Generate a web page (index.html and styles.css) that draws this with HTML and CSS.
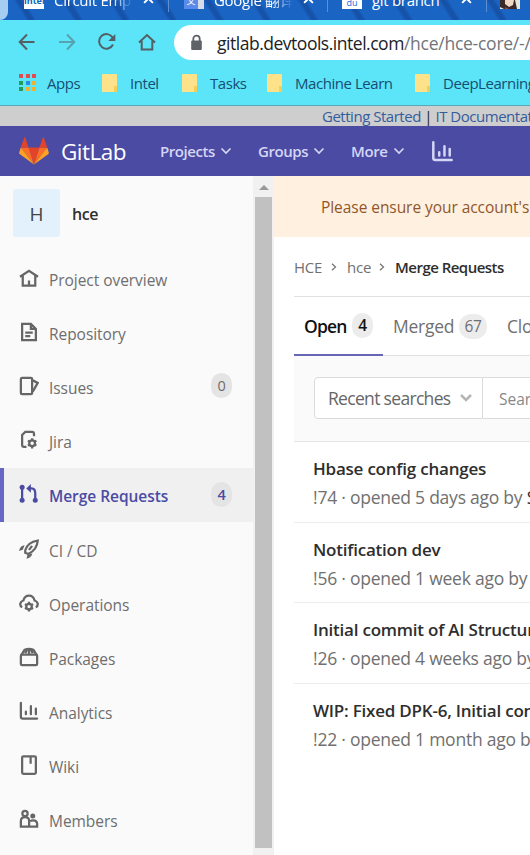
FILE: index.html
```html
<!DOCTYPE html>
<html lang="en">
<head>
<meta charset="utf-8">
<title>Merge Requests · hce · GitLab</title>
<link rel="stylesheet" href="styles.css">
</head>
<body>
<header class="tabstrip">
  <span class="tab-edge"></span>
  <div class="tab tab-1"><span class="fav fav-intel">intel</span><span class="tab-title fade">Circuit Emp</span><svg class="close" viewBox="0 0 10 10"><path d="M1 1l8 8M9 1L1 9"/></svg></div>
  <div class="tab tab-2"><span class="fav fav-google">文</span><span class="tab-title fade">Google 翻译</span><svg class="close" viewBox="0 0 10 10"><path d="M1 1l8 8M9 1L1 9"/></svg></div>
  <div class="tab tab-3"><span class="fav fav-du">du</span><span class="tab-title">git branch</span><svg class="close" viewBox="0 0 10 10"><path d="M1 1l8 8M9 1L1 9"/></svg></div>
  <div class="tab tab-4"><svg class="face" viewBox="0 0 20 9"><path fill="#3a2a28" d="M0 0h20v9H0z"/><path fill="#f0d9c4" d="M5 0h9l-1 5-4 2-4-3z"/><path fill="#e4e8dc" d="M15 0h5v9h-3zM0 7l4 2H0z"/><path fill="#b33a3a" d="M5 7l4 2H5z"/></svg></div>
</header>
<div class="toolbar">
  <svg class="nav" viewBox="0 0 20 20"><path d="M17.500 10H3M10 2.500L2.700 10l7.300 7.500"/></svg>
  <svg class="nav dim" viewBox="0 0 20 20"><path d="M2 10h15M10 2.500l7.300 7.500-7.300 7.500"/></svg>
  <svg class="nav" viewBox="0 0 20 20"><path d="M16 12.500A7.300 7.300 0 1 1 15.600 5.500"/><path class="solid" d="M18.300 2v7h-7z"/></svg>
  <svg class="nav" viewBox="0 0 20 20"><path d="M2 10.500l8-7.500 8 7.500M4.700 9v8.500h10.600V9"/></svg>
  <div class="omnibox">
    <svg class="lock" viewBox="0 0 12 16"><path d="M3 7V4.500a3 3 0 0 1 6 0V7" fill="none" stroke="#5f6368" stroke-width="1.700"/><rect x="1" y="6" width="10" height="9" rx="1" fill="#5f6368"/></svg>
    <span class="url">gitlab.devtools.intel.com<span class="path">/hce/hce-core/-/</span></span>
  </div>
</div>
<nav class="bookmarks">
  <span class="apps"><i></i><i></i><i></i><i></i><i></i><i></i><i></i><i></i><i></i></span><span class="bm bm-apps">Apps</span>
  <span class="folder"></span><span class="bm bm-intel">Intel</span>
  <span class="folder"></span><span class="bm bm-tasks">Tasks</span>
  <span class="folder"></span><span class="bm bm-ml">Machine Learn</span>
  <span class="folder"></span><span class="bm">DeepLearning</span>
</nav>
<div class="notice"><a>Getting Started</a> <b>|</b> <a>IT Documentat</a></div>
<div class="gitlab-bar">
  <svg class="logo" viewBox="0 0 30 28"><path fill="#e24329" d="M15 27.500L9.500 10.500h11z"/><path fill="#fc6d26" d="M15 27.500L9.500 10.500H1.800zM15 27.500l5.500-17h7.700z"/><path fill="#fca326" d="M1.800 10.500L.2 15.600c-.2.500 0 1 .4 1.300L15 27.500zM28.200 10.500l1.600 5.100c.2.500 0 1-.4 1.300L15 27.500z"/><path fill="#e24329" d="M1.800 10.500h7.700L6.200.500c-.2-.5-.8-.5-1 0zM28.200 10.500h-7.700L23.800.500c.2-.5.800-.5 1 0z"/></svg>
  <span class="brand">GitLab</span>
  <span class="menu m-projects">Projects</span><svg class="chev" viewBox="0 0 12 8"><path d="M1.500 1.500L6 6l4.500-4.500"/></svg>
  <span class="menu m-groups">Groups</span><svg class="chev" viewBox="0 0 12 8"><path d="M1.500 1.500L6 6l4.500-4.500"/></svg>
  <span class="menu m-more">More</span><svg class="chev" viewBox="0 0 12 8"><path d="M1.500 1.500L6 6l4.500-4.500"/></svg>
  <svg class="chart" viewBox="0 0 16 16"><path d="M1 1v12q0 1.500 1.500 1.500H15M5.500 8.500V11M9.500 4v7M13.500 6v5"/></svg>
</div>
<div class="body">
  <aside class="sidebar">
    <div class="project"><span class="avatar">H</span><span class="pname">hce</span></div>
    <div class="item"><svg class="ico" viewBox="0 0 16 16"><path d="M.8 7L8 2.200 15.200 7M3 6v8h10V6M8 10v4"/></svg><span>Project overview</span></div>
    <div class="item"><svg class="ico" viewBox="0 0 16 16"><path d="M2.500 1.500h7l4 4v9h-11zM9.500 1.500v4h4M5 8.500h6M5 11.300h4"/></svg><span>Repository</span></div>
    <div class="item"><svg class="ico" viewBox="0 0 16 16"><rect x="1.500" y="1.500" width="9" height="13" rx="1"/><path d="M11 3.500l4 2-4 7"/></svg><span>Issues</span><em class="count">0</em></div>
    <div class="item"><svg class="ico" viewBox="0 0 16 16"><path d="M12 5V3q0-1.500-1.500-1.500H5L2.500 4v8q0 1.500 1.500 1.500h2"/><circle cx="10.500" cy="10.500" r="2.300"/><path d="M10.500 6.500v2M10.500 12.700v2M7.100 8.500l1.500.9M12.400 11.600l1.500.9M7.100 12.500l1.500-.9M12.400 9.400l1.500-.9"/></svg><span>Jira</span></div>
    <div class="item active"><svg class="ico" viewBox="0 0 16 16"><path d="M2.500 3v10M7.500 3.500h2.500q3 0 3 4V13"/><path class="solid" d="M9.500 0v7L5.800 3.500z"/><circle class="solid" cx="2.500" cy="2.500" r="2"/><circle class="solid" cx="2.500" cy="13" r="2"/><circle class="solid" cx="13" cy="13" r="2"/></svg><span>Merge Requests</span><em class="count">4</em></div>
    <div class="item"><svg class="ico" viewBox="0 0 16 16"><path d="M5 9q2-6.500 10-7.800Q14.500 8.500 7.500 12L5 11zM8 8.700l2.500-3.200"/><path class="solid" d="M4.500 5Q1 5.200 0 9.500l3-1zM10.700 11.500q-.5 3-4.700 4.300l.7-3z"/></svg><span>CI / CD</span></div>
    <div class="item"><svg class="ico" viewBox="0 0 16 16"><path d="M2.500 11.500Q.8 10.500 1 8.500q.5-2 2.500-2.500Q4.500 2 8 2t4.500 4q2 .5 2.500 2.500.2 2-1.500 3"/><circle cx="8" cy="10.800" r="2.200"/><path d="M8 7v1.500M8 13v1.700M4.700 8.900l1.300.7M10 12l1.300.7M4.700 12.700L6 12M10 9.600l1.300-.7"/></svg><span>Operations</span></div>
    <div class="item"><svg class="ico" viewBox="0 0 16 16"><rect x="1.500" y="6" width="13" height="8.500" rx="1"/><path d="M1.800 6.500L4.500 2.200Q8 1 11.500 2.200l2.700 4.300M8 1.500V6M5 5l1.300-2.500M11 5L9.700 2.500"/></svg><span>Packages</span></div>
    <div class="item"><svg class="ico" viewBox="0 0 16 16"><path stroke-linecap="round" d="M1.500 1.500v11q0 1.500 1.500 1.500h11.500M5.500 8.500v2M9.500 4v6.500M13.500 6v4.500"/></svg><span>Analytics</span></div>
    <div class="item"><svg class="ico" viewBox="0 0 16 16"><rect x="2.500" y="1" width="11" height="14" rx="1"/><path d="M9.300 1v6"/></svg><span>Wiki</span></div>
    <div class="item"><svg class="ico" viewBox="0 0 16 16"><circle cx="4.800" cy="3.500" r="2.100"/><path d="M1.500 14V9.500q0-3 3.300-3t3.300 3V14zM8 14h6.500v-2q0-3-3.200-3-1.500 0-2.300.8"/><circle class="solid" cx="11" cy="5.500" r="2"/></svg><span>Members</span></div>
  </aside>
  <div class="scrollbar"><span class="up"></span><span class="thumb"></span></div>
  <main class="main">
    <div class="alert">Please ensure your account's</div>
    <div class="content">
      <div class="crumbs"><span class="c-group">HCE</span><svg class="sep" viewBox="0 0 6 8"><path d="M1 .8L4.500 4 1 7.200"/></svg><span class="c-proj">hce</span><svg class="sep" viewBox="0 0 6 8"><path d="M1 .8L4.500 4 1 7.200"/></svg><strong>Merge Requests</strong></div>
      <div class="tabs"><div class="t on"><span class="t-open">Open</span><em>4</em></div><div class="t"><span class="t-merged">Merged</span><em class="wide">67</em></div><div class="t"><span>Clo</span></div></div>
      <div class="filter"><div class="recent"><span>Recent searches</span><svg viewBox="0 0 12 8"><path d="M1 1l5 5 5-5"/></svg></div><div class="search">Sear</div></div>
      <div class="mr"><h3>Hbase config changes</h3><p>!74 · opened 5 days ago by <b>S</b></p></div>
      <div class="mr"><h3>Notification dev</h3><p>!56 · opened 1 week ago by</p></div>
      <div class="mr"><h3>Initial commit of AI Structur</h3><p>!26 · opened 4 weeks ago by</p></div>
      <div class="mr last"><h3>WIP: Fixed DPK-6, Initial con</h3><p>!22 · opened 1 month ago by</p></div>
    </div>
  </main>
</div>
</body>
</html>
```
FILE: styles.css
```css
* { box-sizing: border-box; }
body { margin: 0; width: 530px; height: 855px; overflow: hidden; background: #fff; font-family: "Open Sans", "Noto Sans CJK SC", sans-serif; white-space: nowrap; }
svg { flex: none; }
em { font-style: normal; }
.tabstrip { height: 20px; display: flex; overflow: hidden; background: repeating-linear-gradient(58deg, #1a64c4 0 22px, #1552a8 25px 28px, #1a64c4 31px 40px); color: #fff; }
.tab-edge { width: 8px; height: 20px; background: #a5cdf2; border-radius: 0 0 8px 0; }
.tab { height: 12px; display: flex; align-items: flex-start; flex: none; border-right: 1px solid #5d8fd2; }
.tab-1 { width: 161px; padding-left: 16px; }
.tab-2 { width: 159px; padding-left: 15px; }
.tab-3 { width: 159px; padding-left: 14px; }
.tab-4 { padding-left: 13px; border: 0; }
.fav { width: 20px; height: 9px; margin-right: 10px; overflow: hidden; font-size: 9px; line-height: 2px; text-align: center; }
.fav-intel { background: #fff; color: #0868b8; font-weight: 700; }
.fav-google { background: #5b8bea; border-right: 6px solid #d8dbe8; }
.fav-du { background: #fff; color: #1769e0; line-height: 5px; }
.face { width: 20px; height: 9px; }
.tab-title { width: 83px; font-size: 15px; line-height: 20px; margin-top: -10px; overflow: hidden; letter-spacing: -.3px; }
.fade { -webkit-mask-image: linear-gradient(90deg, #000 70%, transparent 95%); mask-image: linear-gradient(90deg, #000 70%, transparent 95%); }
.close { width: 11px; height: 11px; margin: -7px 0 0 6px; fill: none; stroke: #fff; stroke-width: 1.800; }
.toolbar { height: 45px; background: #5ce5f8; display: flex; align-items: center; padding-left: 17px; }
.nav { width: 20px; height: 20px; margin-right: 20px; margin-top: -1px; fill: none; stroke: #555f66; stroke-width: 2; }
.nav .solid { fill: #555f66; stroke: none; }
.dim { opacity: .5; }
.omnibox { flex: 1; height: 35px; margin-left: -3px; background: #fff; border-radius: 18px 0 0 18px; display: flex; align-items: center; overflow: hidden; padding-left: 16px; }
.lock { width: 13px; height: 17px; }
.url { font-size: 17.500px; margin-left: 14px; color: #202124; letter-spacing: -.48px; }
.path { color: #70757a; letter-spacing: -.25px; }
.bookmarks { height: 41px; background: #5ce5f8; border-bottom: 1px solid #58a9b8; display: flex; align-items: center; padding: 0 0 5px 19px; color: #174e74; font-size: 15px; letter-spacing: -.45px; overflow: hidden; }
.apps { width: 17px; height: 17px; display: grid; grid-template-columns: repeat(3, 4px); gap: 2.500px; margin-right: 11px; flex: none; }
.apps i { height: 4px; background: #e34b50; }
.apps i:nth-child(4), .apps i:nth-child(7) { background: #279b58; }
.apps i:nth-child(5) { background: #2a8be0; }
.apps i:nth-child(6), .apps i:nth-child(8), .apps i:nth-child(9) { background: #edb32e; }
.folder { width: 15px; height: 18px; background: linear-gradient(#f6ce55, #f6ce55) 100% 100% / 3px 6px no-repeat #fde28a; border-radius: 1px; margin-right: 13px; flex: none; }
.bm { flex: none; }
.bm-apps { width: 55px; }
.bm-intel { width: 52px; }
.bm-tasks { width: 57px; }
.bm-ml { width: 120px; }
.notice { height: 20px; background: #cecece; padding-left: 322px; font-size: 15px; line-height: 20px; letter-spacing: -.48px; color: #345d9d; overflow: hidden; }
.notice b { color: #222; font-weight: 400; }
.gitlab-bar { height: 50px; background: #4b4ba3; display: flex; align-items: center; padding-left: 19px; color: #d5d5f5; }
.logo { width: 30px; height: 28px; }
.brand { color: #fff; font-size: 22.500px; width: 99px; margin-left: 12px; font-weight: 500; letter-spacing: -.5px; }
.menu { font-size: 15px; font-weight: 600; letter-spacing: -.42px; }
.m-projects { width: 60px; }
.m-groups { width: 55px; }
.m-more { width: 42px; }
.chev { width: 12px; height: 8px; fill: none; stroke: #d5d5f5; stroke-width: 1.700; margin-right: 26px; }
.chart { width: 21px; height: 21px; margin-left: 1px; fill: none; stroke: #d5d5f5; stroke-width: 1.900; stroke-linecap: round; }
.body { height: 679px; display: flex; }
.sidebar { width: 253px; background: #fafafa; padding-top: 13px; flex: none; overflow: hidden; }
.project { height: 62.500px; display: flex; padding-left: 13px; }
.avatar { width: 47px; height: 48px; background: #e3f1fd; border-radius: 3px; font-size: 19px; line-height: 51px; text-align: center; color: #444; font-weight: 500; }
.pname { margin-left: 12px; font-size: 16px; line-height: 51px; font-weight: 600; color: #303030; letter-spacing: -.4px; }
.item { height: 54.200px; display: flex; align-items: center; padding: 2px 0 0 19px; color: #6e6e6e; font-size: 15.500px; letter-spacing: -.05px; }
.ico { width: 20px; height: 20px; margin: -4px 10px 0 0; fill: none; stroke: #666; stroke-width: 1.800; }
.ico .solid { fill: #666; stroke: none; }
.item.active { background: #f0f0f0; border-left: 4px solid #6666c4; padding-left: 15px; color: #4b4ba3; font-weight: 600; }
.active .ico { stroke: #4b4ba3; }
.active .ico .solid { fill: #4b4ba3; }
.count { width: 21px; height: 25px; border-radius: 12px; background: #e4e4e4; margin: -4px 21px 0 auto; font-size: 14.500px; line-height: 25px; text-align: center; }
.scrollbar { width: 21px; background: #f1f1f1; display: flex; flex-direction: column; align-items: center; flex: none; }
.up { margin-top: 9px; border: 5px solid transparent; border-top: 0; border-bottom-color: #999; }
.thumb { width: 17px; height: 651px; margin-top: 7px; background: #c1c1c1; }
.main { flex: 1; min-width: 0; overflow: hidden; }
.alert { height: 61px; background: #fff0df; color: #90572c; font-size: 15.500px; line-height: 63px; padding-left: 47px; letter-spacing: -.06px; }
.content { margin-left: 20px; }
.crumbs { height: 60px; border-bottom: 1px solid #e1e1e1; display: flex; align-items: center; font-size: 15px; color: #707070; letter-spacing: -.2px; }
.crumbs strong { color: #2e2e2e; font-weight: 600; letter-spacing: -.52px; }
.c-group { width: 37px; }
.c-proj { width: 32px; }
.sep { width: 6px; height: 8px; margin-right: 10px; fill: none; stroke: #777; stroke-width: 1.300; }
.tabs { height: 59px; display: flex; border-bottom: 1px solid #e1e1e1; }
.t { display: flex; align-items: center; padding: 0 10px; font-size: 17.500px; color: #707070; letter-spacing: -.25px; flex: none; }
.on { color: #111; font-weight: 600; border-bottom: 2px solid #6666b4; width: 89px; margin-bottom: -1px; }
.t em { width: 21px; height: 25px; background: #ececec; border-radius: 12px; font-size: 15.500px; line-height: 25px; text-align: center; }
.t .wide { width: 28px; }
.t-open { width: 48px; letter-spacing: -.8px; }
.t-merged { width: 66px; }
.filter { height: 86px; background: #fafafa; border-bottom: 1px solid #e5e5e5; padding: 21px 0 0 20px; display: flex; }
.recent { width: 169px; height: 42px; border: 1px solid #dbdbdb; border-radius: 4px 0 0 4px; background: #fff; display: flex; align-items: center; padding-left: 13px; color: #666; font-size: 17.500px; letter-spacing: -.68px; flex: none; }
.recent span { width: 132px; }
.recent svg { width: 12px; height: 8px; fill: none; stroke: #b5b5b5; stroke-width: 2.500; }
.search { width: 300px; height: 42px; border: solid #dbdbdb; border-width: 1px 0; background: #fff; padding-left: 16px; font-size: 15.500px; line-height: 43px; color: #888; flex: none; }
.mr { height: 80.600px; padding: 13px 0 0 19px; border-bottom: 1px solid #ececec; }
.last { border: 0; }
.mr h3 { margin: 0; font-size: 17px; line-height: 28px; font-weight: 600; color: #2e2e2e; letter-spacing: -.22px; }
.mr p { margin: 0; font-size: 17.500px; line-height: 28px; color: #707070; letter-spacing: -.24px; }
.mr b { font-weight: 400; color: #2e2e2e; }
```
